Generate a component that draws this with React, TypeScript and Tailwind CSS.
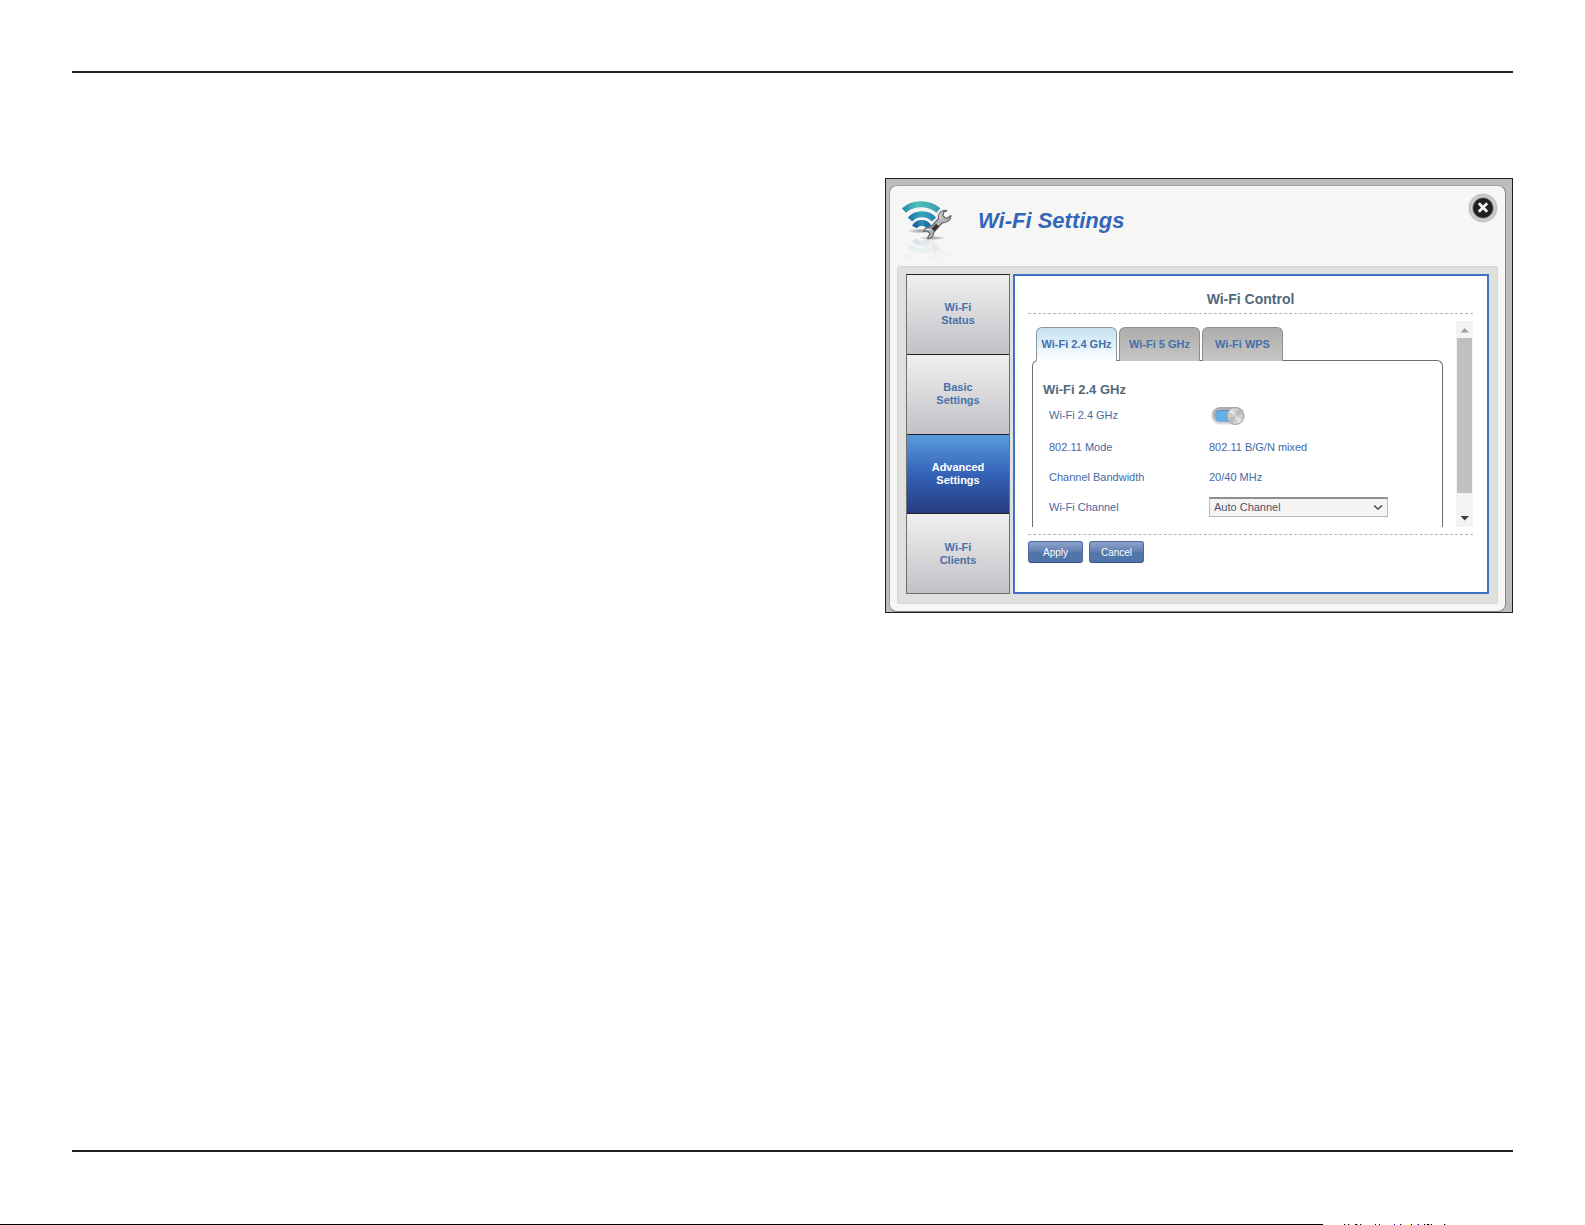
import React, { useState } from "react";

const sections = [
  ["Wi-Fi", "Status"],
  ["Basic", "Settings"],
  ["Advanced", "Settings"],
  ["Wi-Fi", "Clients"],
];
const tabs = ["Wi-Fi 2.4 GHz", "Wi-Fi 5 GHz", "Wi-Fi WPS"];

function WifiArcs() {
  return (
    <g fill="none">
      <path d="M2 10.500C11 2 27 2 36.500 10.500" stroke="url(#arcTop)" strokeWidth="6" />
      <path d="M8 19.500C14 12.500 26 12.500 32 19.500" stroke="url(#arcMid)" strokeWidth="5.800" />
      <path d="M12.500 27C15.500 21.500 24 21.500 27 27" stroke="url(#arcLow)" strokeWidth="5.600" />
    </g>
  );
}

function Wrench() {
  return (
    <g>
      <path
        d="M25.500 38.500C29 39 32 36.500 31.500 32.500L40.500 22.500C45 23 49 20 49 15.500L44.500 18.500L41 16L41.500 12.500L45 10.500C40 9.500 35.500 13.500 36.500 18.500L28 28C25 27 22 28.500 21.500 31.500L25.500 31L28 33.500Z"
        fill="#b4b6b7"
        stroke="#66686a"
        strokeWidth="1.200"
        strokeLinejoin="round"
      />
      <path d="M31 30L35.500 25" stroke="#343435" strokeWidth="4" />
      <path d="M39 19L37.500 16Q38 13 40.500 12" stroke="#eeeeee" strokeWidth="1" fill="none" />
      <path d="M24 29.500Q27 28.500 29 30" stroke="#eeeeee" strokeWidth="1" fill="none" />
    </g>
  );
}

function WifiSettingsIcon() {
  return (
    <svg width="52" height="60" viewBox="0 0 52 60" className="shrink-0" aria-hidden="true">
      <defs>
        <linearGradient id="arcTop" x1="0" x2="1" y1="0" y2="0">
          <stop offset="0" stopColor="#2b8fb6" />
          <stop offset="0.4" stopColor="#4ec0b8" />
          <stop offset="1" stopColor="#389fb0" />
        </linearGradient>
        <linearGradient id="arcMid" x1="0" x2="1" y1="0" y2="0">
          <stop offset="0" stopColor="#207caf" />
          <stop offset="0.5" stopColor="#35a6b8" />
          <stop offset="1" stopColor="#2785b1" />
        </linearGradient>
        <linearGradient id="arcLow" x1="0" x2="1" y1="0" y2="0">
          <stop offset="0" stopColor="#175f9a" />
          <stop offset="0.5" stopColor="#2a8cba" />
          <stop offset="1" stopColor="#1d6ba2" />
        </linearGradient>
        <radialGradient id="iconShadow">
          <stop offset="0" stopColor="#55585a" stopOpacity="0.6" />
          <stop offset="1" stopColor="#55585a" stopOpacity="0" />
        </radialGradient>
        <linearGradient id="mirrorFade" x1="0" x2="0" y1="0" y2="1">
          <stop offset="0.6" stopColor="#ffffff" stopOpacity="0.16" />
          <stop offset="1" stopColor="#ffffff" stopOpacity="0" />
        </linearGradient>
        <mask id="mirrorMask">
          <rect width="52" height="60" fill="url(#mirrorFade)" />
        </mask>
      </defs>
      <ellipse cx="19" cy="31" rx="14" ry="2.500" fill="url(#iconShadow)" />
      <ellipse cx="31" cy="38" rx="14" ry="2" fill="url(#iconShadow)" />
      <g mask="url(#mirrorMask)">
        <g transform="translate(0 64) scale(1 -0.900)">
          <WifiArcs />
        </g>
        <g transform="translate(0 73) scale(1 -0.900)">
          <Wrench />
        </g>
      </g>
      <WifiArcs />
      <Wrench />
    </svg>
  );
}

function CloseIcon() {
  return (
    <svg width="30" height="30" viewBox="0 0 30 30" aria-hidden="true">
      <circle cx="15" cy="15" r="14.500" fill="#c5c6c7" />
      <circle cx="15" cy="15" r="12" fill="#d3d4d5" />
      <circle cx="15" cy="15" r="11" fill="#a3a4a6" />
      <circle cx="15" cy="15" r="10" fill="#211f20" />
      <path d="M11.800 11.300L18.200 17.700M18.200 11.300L11.800 17.700" stroke="#f4f4f4" strokeWidth="2.800" strokeLinecap="square" />
    </svg>
  );
}

function ToggleSwitch() {
  return (
    <svg width="34" height="20" viewBox="0 0 34 20" aria-hidden="true">
      <defs>
        <linearGradient id="track" x1="0" x2="0" y1="0" y2="1">
          <stop offset="0" stopColor="#a9a9a9" />
          <stop offset="1" stopColor="#dededf" />
        </linearGradient>
      </defs>
      <rect x="0.500" y="1" width="33" height="17.500" rx="8.700" fill="url(#track)" />
      <rect x="3.500" y="4" width="24" height="12" rx="5" fill="#65aee6" />
      <path d="M5 7Q6 4.700 9 4.500H18" stroke="#4f93c8" fill="none" />
      <circle cx="24.500" cy="10" r="8.500" fill="#cdcdce" stroke="#a2a2a4" />
      <path d="M24.500 10L18 5.500A8 8 0 0 1 22 2.500ZM24.500 10L31 14.500A8 8 0 0 1 27 17.500Z" fill="#e6e6e6" />
      <path d="M24.500 10L27.500 2.600A8 8 0 0 1 32 7.500ZM24.500 10L21.500 17.400A8 8 0 0 1 17 12.500Z" fill="#bababb" />
    </svg>
  );
}

function FooterEdge() {
  const marks: [number, number, string][] = [
    [0, 1, "#000"], [1, 1, "#0ff"], [4, 1, "#311"], [5, 1, "#0ff"],
    [11, 2, "#000"], [13, 1, "#0ff"], [16, 1, "#311"], [17, 1, "#0ff"],
    [31, 1, "#000"], [35, 1, "#000"], [49, 1, "#ff0"], [50, 1, "#00f"],
    [56, 1, "#311"], [57, 1, "#0ff"], [66, 1, "#ff0"], [67, 1, "#000"],
    [73, 1, "#f90"], [74, 1, "#00f"], [80, 1, "#000"], [81, 1, "#0ff"],
    [83, 2, "#000"], [85, 1, "#0ff"], [87, 1, "#000"], [100, 1, "#000"], [101, 1, "#0ff"],
  ];
  return (
    <div className="flex h-px" aria-hidden="true">
      <div className="flex-1 bg-black" />
      <svg width="262" height="1" viewBox="0 0 262 1" shapeRendering="crispEdges">
        {marks.map(([x, w, c]) => (
          <rect key={x} x={x + 21} y="0" width={w} height="1" fill={c} />
        ))}
      </svg>
    </div>
  );
}

export default function App() {
  const [section, setSection] = useState(2);
  const [tab, setTab] = useState(0);
  const [enabled, setEnabled] = useState(true);

  return (
    <div className="flex min-h-screen flex-col bg-white font-['Liberation_Sans',Arial,sans-serif]">
      <main className="mx-[72px] mt-[71px] flex flex-1 flex-col border-y-2 border-[#231f20] pt-[105px]">
        <div className="ml-auto w-full max-w-[628px] border border-[#231f20] bg-[#bebdbc] pt-[6px] pr-[6px] pl-[3px]">
          <section aria-labelledby="dialog-title" className="rounded-lg border border-[#858585] border-t-[#a0a0a0] border-l-[#a0a0a0] bg-[#f6f6f4] px-[7px] pb-[7px]">
            <header className="flex h-20 items-start pl-[5px]">
              <div className="pt-[14px]">
                <WifiSettingsIcon />
              </div>
              <h1 id="dialog-title" className="pt-[21px] pl-6 text-[22px] leading-7 font-bold text-[#3266b9] italic">
                Wi-Fi Settings
              </h1>
              <button type="button" aria-label="Close" className="mt-[7px] ml-auto shrink-0">
                <CloseIcon />
              </button>
            </header>

            <div className="flex gap-[3px] rounded-xs border border-[#d6d6d6] bg-[#e0e0df] px-2 pt-[7px] pb-[9px]">
              <nav aria-label="Sections" className="flex w-[104px] shrink-0 flex-col border border-[#6f6f70] border-t-[#231f20]">
                {sections.map(([a, b], i) => (
                  <button
                    key={a + b}
                    type="button"
                    onClick={() => setSection(i)}
                    className={
                      "flex-1 border-b border-[#231f20] text-[11px] leading-[13px] font-bold last:border-b-0 " +
                      (i === section
                        ? "bg-linear-to-b from-[#5a9bdc] via-[#3563b8] to-[#243d82] text-white"
                        : "bg-linear-to-b from-[#f0f0f1] to-[#c2c1c6] text-[#4a70a8]")
                    }
                  >
                    {a}
                    <br />
                    {b}
                  </button>
                ))}
              </nav>

              <form className="min-w-0 flex-1 border-2 border-[#3f71c5] bg-white pr-[14px] pb-[29px] pl-[13px]" onSubmit={(e) => e.preventDefault()}>
                <h2 className="border-b border-dashed border-[#b4b4b4] pt-[14px] pb-[5px] text-center text-sm leading-[18px] font-bold text-[#52697b]">
                  Wi-Fi Control
                </h2>

                <div className="mt-[7px] flex gap-[13px]">
                  <div className="min-w-0 flex-1 pt-[6px] pl-1">
                    <div role="tablist" className="flex gap-[2px] pl-1">
                      {tabs.map((t, i) => (
                        <button
                          key={t}
                          type="button"
                          role="tab"
                          aria-selected={i === tab}
                          onClick={() => setTab(i)}
                          className={
                            "h-[34px] w-[81px] rounded-t-md border border-b-0 text-[11px] font-bold whitespace-nowrap text-[#456fae] " +
                            (i === tab
                              ? "relative -mb-px border-[#8d979e] bg-linear-to-b from-[#c5e0f1] to-white"
                              : "-mb-px border-[#8e8e8e] bg-linear-to-b from-[#adadac] to-[#c7c6c5]")
                          }
                        >
                          {t}
                        </button>
                      ))}
                    </div>

                    <div className="rounded-t-md border border-b-0 border-[#6c6e70] pt-5 pl-[10px] text-[#4669a4]">
                      <h3 className="text-[13px] leading-[18px] font-bold text-[#52697b]">Wi-Fi 2.4 GHz</h3>
                      <div className="grid grid-cols-[160px_1fr] items-center pt-px pb-[5px] pl-[6px] text-[11px] leading-[13px]">
                        <label htmlFor="radio" className="h-8 py-[9px]">Wi-Fi 2.4 GHz</label>
                        <span className="relative ml-[2px] h-5 w-[34px]">
                          <input
                            id="radio"
                            type="checkbox"
                            role="switch"
                            checked={enabled}
                            onChange={(e) => setEnabled(e.target.checked)}
                            className="absolute inset-0 h-full w-full opacity-0"
                          />
                          <ToggleSwitch />
                        </span>
                        <span className="h-[30px] py-[9px]">802.11 Mode</span>
                        <span className="h-[30px] py-[9px]">802.11 B/G/N mixed</span>
                        <span className="h-[30px] py-[9px]">Channel Bandwidth</span>
                        <span className="h-[30px] py-[9px]">20/40 MHz</span>
                        <label htmlFor="channel" className="h-[30px] py-[9px]">Wi-Fi Channel</label>
                        <span className="relative w-[179px]">
                          <select
                            id="channel"
                            className="block h-5 w-full appearance-none border border-t-2 border-[#b9b9ba] border-t-[#8f8f8f] bg-[#f5f4f3] pl-1 text-[11px] leading-[15px] text-[#4c5567]"
                          >
                            <option>Auto Channel</option>
                          </select>
                          <svg className="pointer-events-none absolute top-[7px] right-[5px]" width="10" height="7" viewBox="0 0 10 7" aria-hidden="true">
                            <path d="M1 1.500L5 5L9 1.500" fill="none" stroke="#35475e" strokeWidth="1.500" />
                          </svg>
                        </span>
                      </div>
                    </div>
                  </div>

                  <div className="flex w-[17px] shrink-0 flex-col bg-[#f3f3f3] px-px" aria-hidden="true">
                    <svg width="15" height="17" viewBox="0 0 15 17" className="shrink-0">
                      <path d="M3.500 11.500H12L7.700 7Z" fill="#a0a0a0" />
                    </svg>
                    <div className="flex-1 bg-[#c0c0bf]" />
                    <svg width="15" height="34" viewBox="0 0 15 34" className="shrink-0">
                      <path d="M3.500 23H12L7.700 27.500Z" fill="#3f3f42" />
                    </svg>
                  </div>
                </div>

                <div className="mt-[7px] flex gap-[6px] border-t border-dashed border-[#b4b4b4] pt-[6px]">
                  {["Apply", "Cancel"].map((t) => (
                    <button
                      key={t}
                      type="button"
                      className="h-[22px] w-[55px] rounded-[3px] border border-[#4c6c9f] border-b-[#365584] bg-linear-to-b from-[#8fa3ca] from-0% via-[#6482b5] via-45% to-[#5075aa] to-55% text-[10px] text-white"
                    >
                      {t}
                    </button>
                  ))}
                </div>
              </form>
            </div>
          </section>
        </div>
      </main>
      <footer className="pt-[72px]">
        <FooterEdge />
      </footer>
    </div>
  );
}
